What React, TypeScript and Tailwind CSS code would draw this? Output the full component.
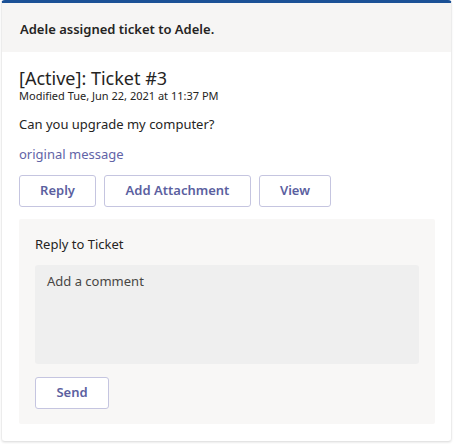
export default function App() {
  const font = { fontFamily: '"Segoe UI", "Noto Sans", sans-serif' };
  return (
    <div className="w-[454px] h-[444px] bg-white" style={font}>
      <div className="ml-[1px] w-[451px] h-[442px] rounded-[4px] border-t-[3px] border-t-[#1b5196] border-x border-b border-x-[#ececec] border-b-[#e4e4e4] shadow-[0_1px_2px_rgba(0,0,0,0.08)] flex flex-col">
        <div className="h-[49px] bg-[#f6f5f4] flex items-center pt-[4px] px-[18px] text-[13px] font-semibold text-[#252423]">
          Adele assigned ticket to Adele.
        </div>
        <div className="px-[17px] pt-[15px] flex flex-col">
          <div className="text-[18px] leading-[22px] text-[#252423]">[Active]: Ticket #3</div>
          <div className="text-[11px] leading-[14px] text-[#252423]">Modified Tue, Jun 22, 2021 at 11:37 PM</div>
          <div className="mt-[12px] text-[13px] leading-[18px] text-[#252423]">Can you upgrade my computer?</div>
          <div className="mt-[12px] text-[13px] leading-[18px] text-[#6264a7]">original message</div>
          <div className="mt-[12px] flex gap-[8px]">
            <button className="w-[77px] h-[32px] rounded-[3px] border border-[#c5c5e0] bg-white text-[13px] font-semibold text-[#5b5fa0]">Reply</button>
            <button className="w-[147px] h-[32px] rounded-[3px] border border-[#c5c5e0] bg-white text-[13px] font-semibold text-[#5b5fa0]">Add Attachment</button>
            <button className="w-[72px] h-[32px] rounded-[3px] border border-[#c5c5e0] bg-white text-[13px] font-semibold text-[#5b5fa0]">View</button>
          </div>
          <div className="mt-[12px] w-[416px] h-[205px] bg-[#f8f7f6] rounded-[2px] px-[16px] pt-[15px] flex flex-col">
            <div className="text-[13px] leading-[20px] text-[#252423]">Reply to Ticket</div>
            <div className="mt-[11px] w-[384px] h-[99px] bg-[#efefef] rounded-[3px] px-[12px] pt-[6px] text-[13px] leading-[20px] text-[#484644]">Add a comment</div>
            <button className="mt-[13px] w-[74px] h-[32px] rounded-[3px] border border-[#c5c5e0] bg-white text-[13px] font-semibold text-[#5b5fa0]">Send</button>
          </div>
        </div>
      </div>
    </div>
  );
}
